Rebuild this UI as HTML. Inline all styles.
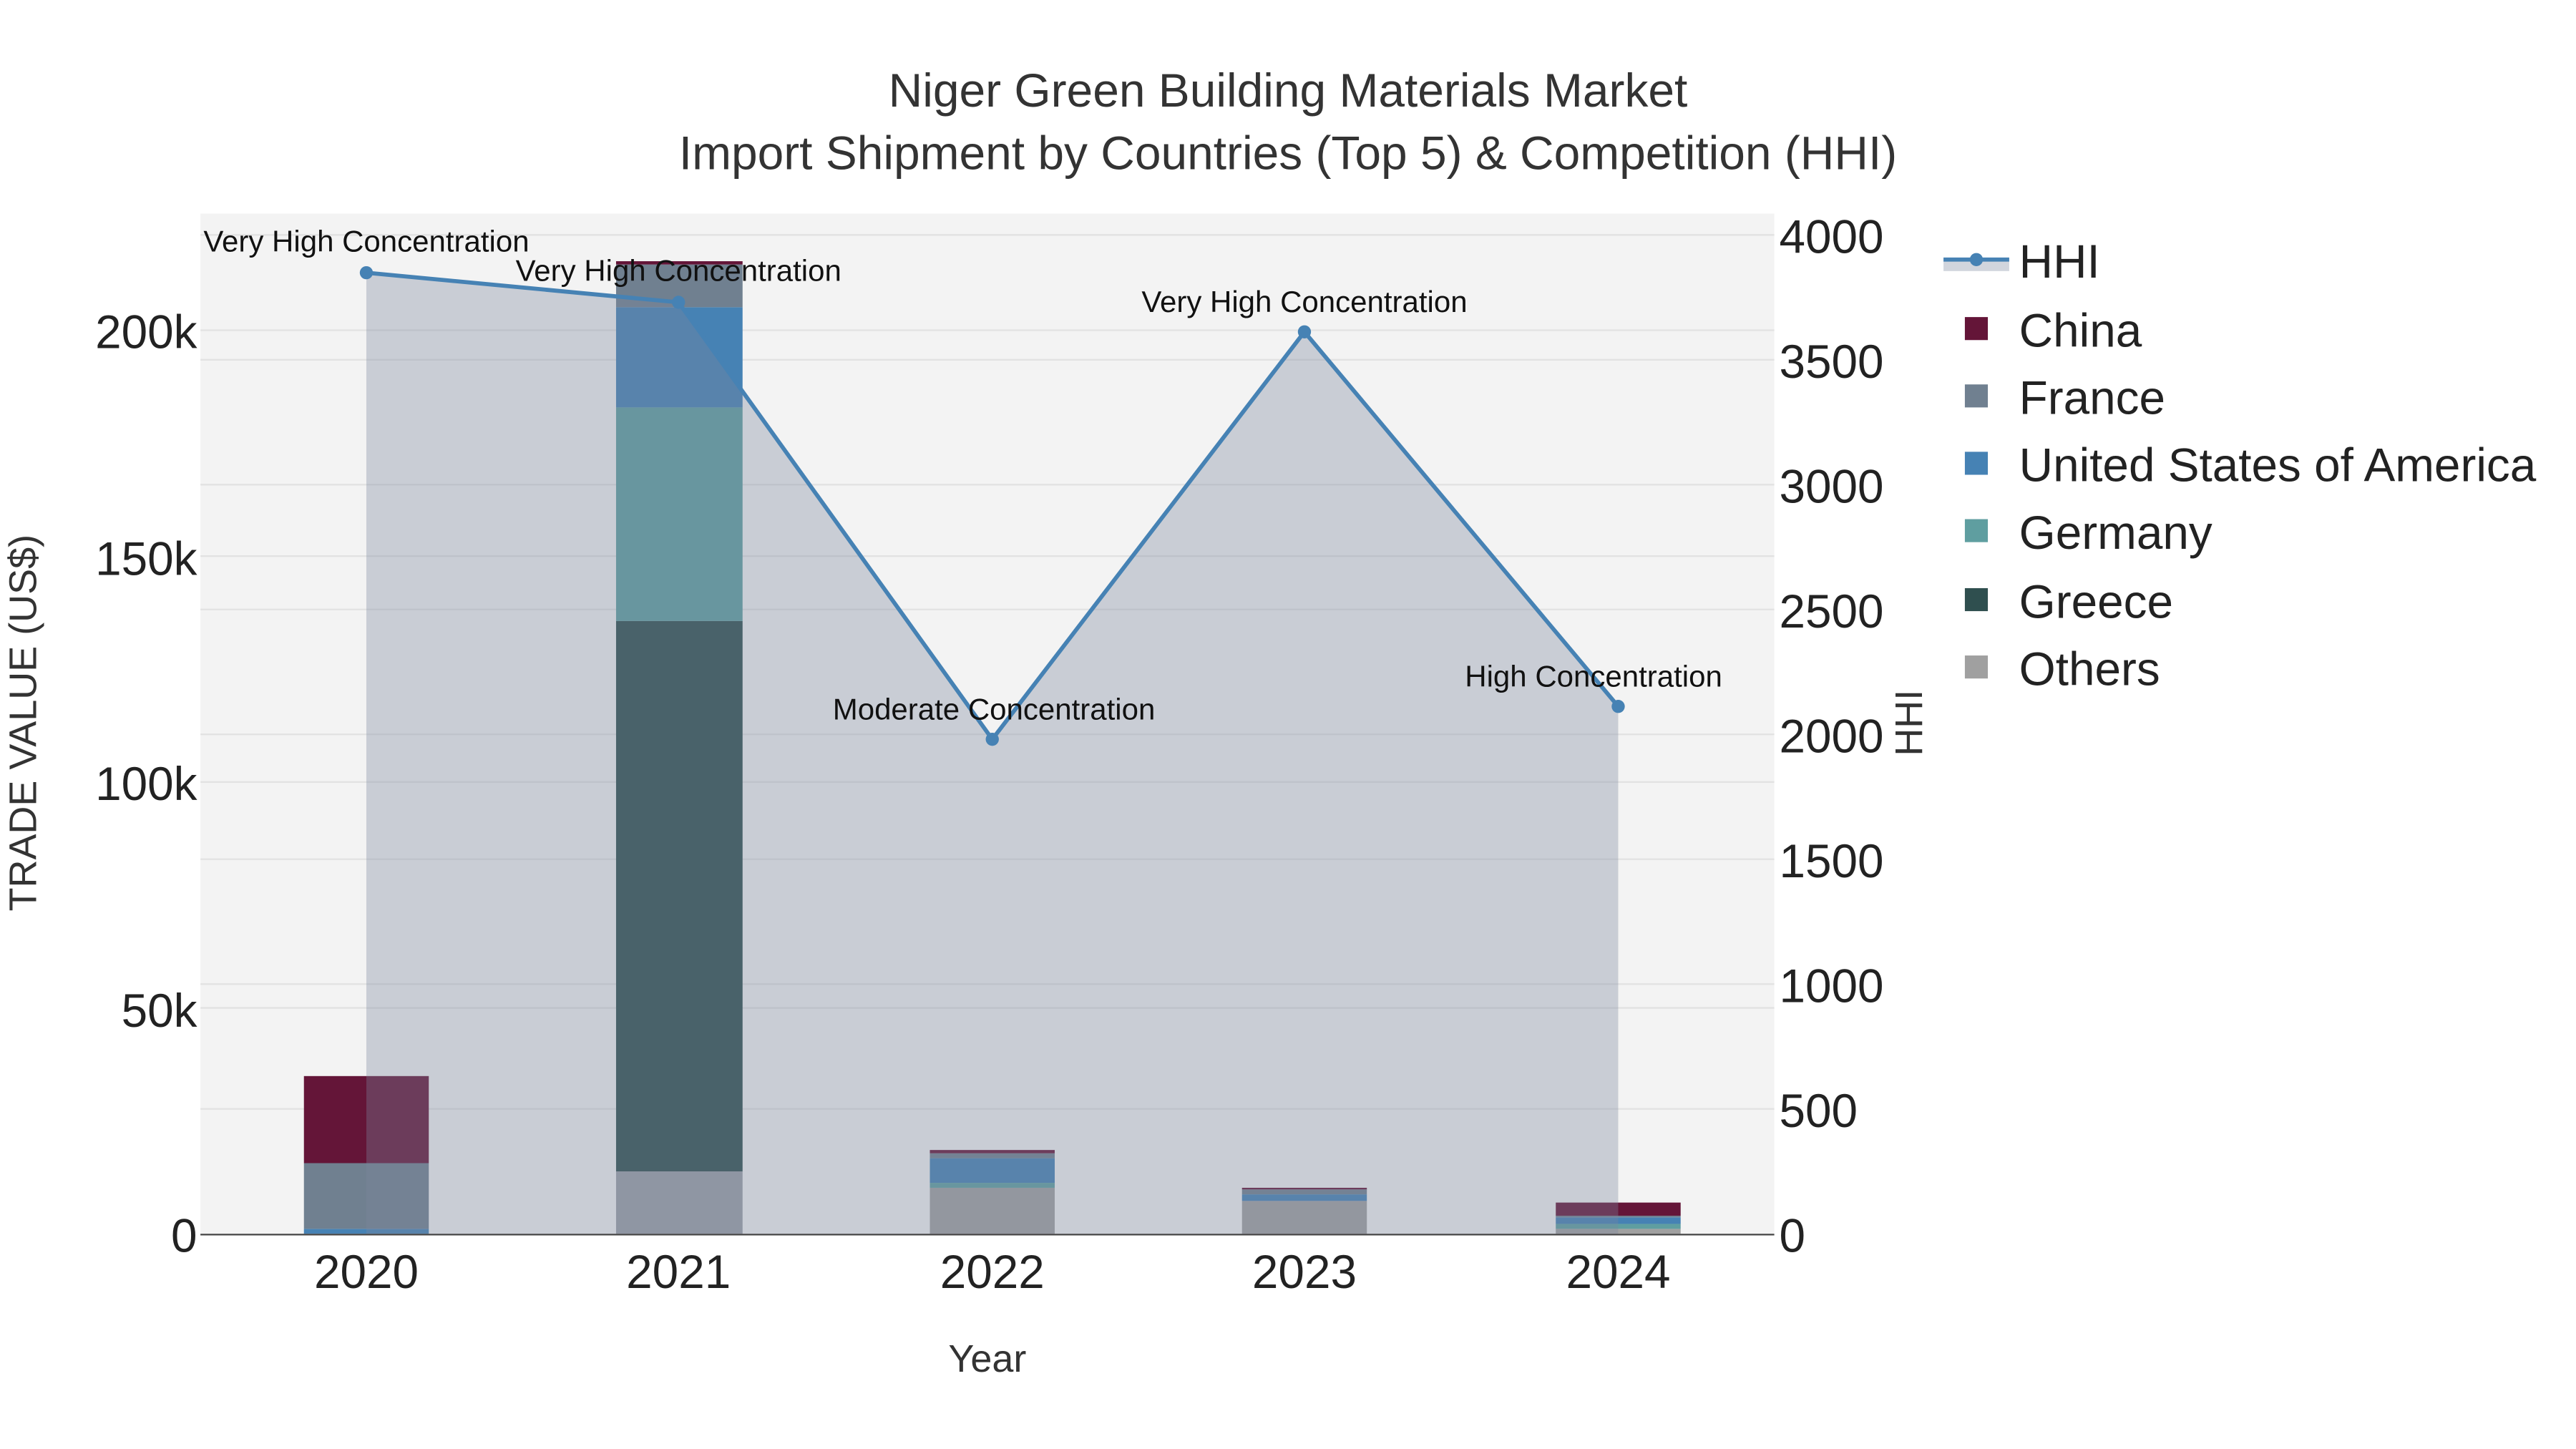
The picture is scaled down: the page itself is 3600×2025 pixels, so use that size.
<!DOCTYPE html>
<html><head><meta charset="utf-8"><style>
html,body{margin:0;padding:0;background:#fff;}
svg{display:block;font-family:"Liberation Sans",Arial,sans-serif;}
</style></head><body>
<svg width="3600" height="2025" viewBox="0 0 1568 882" xmlns="http://www.w3.org/2000/svg">
<rect width="1600" height="900" fill="#fff"/>
<rect x="122" y="130" width="958" height="622" fill="#f3f3f3"/>
<g stroke="#e2e2e2" stroke-width="1">
<line x1="122" x2="1080" y1="613.5" y2="613.5"/><line x1="122" x2="1080" y1="476" y2="476"/>
<line x1="122" x2="1080" y1="338.5" y2="338.5"/><line x1="122" x2="1080" y1="201" y2="201"/>
<line x1="122" x2="1080" y1="675" y2="675"/><line x1="122" x2="1080" y1="599" y2="599"/>
<line x1="122" x2="1080" y1="523" y2="523"/><line x1="122" x2="1080" y1="447" y2="447"/>
<line x1="122" x2="1080" y1="371" y2="371"/><line x1="122" x2="1080" y1="295" y2="295"/>
<line x1="122" x2="1080" y1="219" y2="219"/><line x1="122" x2="1080" y1="143" y2="143"/>
</g>
<g>
<rect x="185" y="748" width="76" height="3" fill="#4682b4"/>
<rect x="185" y="708" width="76" height="40" fill="#708090"/>
<rect x="185" y="655" width="76" height="53" fill="#641538"/>

<rect x="375" y="713" width="77" height="38" fill="#9a9fa6"/>
<rect x="375" y="378" width="77" height="335" fill="#2f4f4f"/>
<rect x="375" y="248" width="77" height="130" fill="#5f9ea0"/>
<rect x="375" y="187" width="77" height="61" fill="#4682b4"/>
<rect x="375" y="161" width="77" height="26" fill="#708090"/>
<rect x="375" y="159" width="77" height="2" fill="#641538"/>

<rect x="566" y="723" width="76" height="28" fill="#a0a0a0"/>
<rect x="566" y="720" width="76" height="3" fill="#5f9ea0"/>
<rect x="566" y="705" width="76" height="15" fill="#4682b4"/>
<rect x="566" y="702" width="76" height="3" fill="#708090"/>
<rect x="566" y="700" width="76" height="2" fill="#641538"/>

<rect x="756" y="731" width="76" height="20" fill="#a0a0a0"/>
<rect x="756" y="727" width="76" height="4" fill="#4682b4"/>
<rect x="756" y="724" width="76" height="3" fill="#708090"/>
<rect x="756" y="723" width="76" height="1" fill="#641538"/>

<rect x="947" y="748" width="76" height="3" fill="#a0a0a0"/>
<rect x="947" y="745" width="76" height="3" fill="#5f9ea0"/>
<rect x="947" y="741" width="76" height="4" fill="#4682b4"/>
<rect x="947" y="740" width="76" height="1" fill="#708090"/>
<rect x="947" y="732" width="76" height="8" fill="#641538"/>
</g>
<path d="M223,166 L413,184 L604,450 L794,202 L985,430 L985,751 L223,751 Z" fill="rgba(124,134,158,0.35)"/>
<polyline points="223,166 413,184 604,450 794,202 985,430" fill="none" stroke="#4682b4" stroke-width="2.5"/>
<g fill="#4682b4"><circle cx="223" cy="166" r="4"/><circle cx="413" cy="184" r="4"/><circle cx="604" cy="450" r="4"/><circle cx="794" cy="202" r="4"/><circle cx="985" cy="430" r="4"/></g>
<line x1="122" x2="1080" y1="751.5" y2="751.5" stroke="#444" stroke-width="1"/>
<g font-size="18.3" fill="#111" text-anchor="middle">
<text x="223" y="153">Very High Concentration</text>
<text x="413" y="171">Very High Concentration</text>
<text x="605" y="438">Moderate Concentration</text>
<text x="794" y="190">Very High Concentration</text>
<text x="970" y="418">High Concentration</text>
</g>
<g font-size="28.7" fill="#333" text-anchor="middle">
<text x="784" y="65">Niger Green Building Materials Market</text>
<text x="784" y="103">Import Shipment by Countries (Top 5) &amp; Competition (HHI)</text>
</g>
<g font-size="28.6" fill="#222" text-anchor="end">
<text x="120" y="762">0</text><text x="120" y="625">50k</text><text x="120" y="487">100k</text>
<text x="120" y="350">150k</text><text x="120" y="212">200k</text>
</g>
<g font-size="28.6" fill="#222" text-anchor="start">
<text x="1083" y="762">0</text><text x="1083" y="686">500</text><text x="1083" y="610">1000</text>
<text x="1083" y="534">1500</text><text x="1083" y="458">2000</text><text x="1083" y="382">2500</text>
<text x="1083" y="306">3000</text><text x="1083" y="230">3500</text><text x="1083" y="154">4000</text>
</g>
<g font-size="28.6" fill="#222" text-anchor="middle">
<text x="223" y="784">2020</text><text x="413" y="784">2021</text><text x="604" y="784">2022</text>
<text x="794" y="784">2023</text><text x="985" y="784">2024</text>
</g>
<text x="601" y="835" font-size="23.5" fill="#333" text-anchor="middle">Year</text>
<text transform="translate(22,440) rotate(-90)" font-size="23.5" fill="#333" text-anchor="middle">TRADE VALUE (US$)</text>
<text transform="translate(1170,440) rotate(-90)" font-size="23.5" fill="#333" text-anchor="middle">HHI</text>
<rect x="1183" y="157" width="40" height="8" fill="rgba(124,134,158,0.35)"/>
<line x1="1183" x2="1223" y1="158" y2="158" stroke="#4682b4" stroke-width="2.5"/>
<circle cx="1203" cy="158" r="4" fill="#4682b4"/>
<g>
<rect x="1196" y="193" width="14" height="14" fill="#641538"/>
<rect x="1196" y="234" width="14" height="14" fill="#708090"/>
<rect x="1196" y="275" width="14" height="14" fill="#4682b4"/>
<rect x="1196" y="316" width="14" height="14" fill="#5f9ea0"/>
<rect x="1196" y="358" width="14" height="14" fill="#2f4f4f"/>
<rect x="1196" y="399" width="14" height="14" fill="#a0a0a0"/>
</g>
<g font-size="28.6" fill="#222">
<text x="1229" y="169">HHI</text>
<text x="1229" y="211">China</text>
<text x="1229" y="252">France</text>
<text x="1229" y="293">United States of America</text>
<text x="1229" y="334">Germany</text>
<text x="1229" y="376">Greece</text>
<text x="1229" y="417">Others</text>
</g>
</svg>
</body></html>
